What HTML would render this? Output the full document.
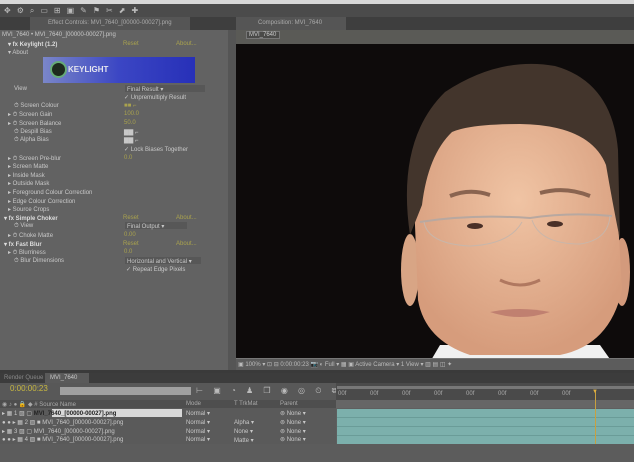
<!DOCTYPE html><html><head><style>
*{margin:0;padding:0;box-sizing:border-box}
body{width:634px;height:462px;overflow:hidden;background:#5f5f5f;font-family:"Liberation Sans",sans-serif;font-size:6px;color:#c8c8c8;position:relative}
.a{position:absolute;white-space:nowrap}
.y{color:#a9a24e}
.b{font-weight:bold;color:#ddd}
</style></head><body>
<div class="a" style="left:0;top:0;width:634px;height:4px;background:#d8d8d8"></div>
<div class="a" style="left:0;top:4px;width:634px;height:13px;background:#4b4b4b"></div>
<div class="a" style="left:4px;top:6px;color:#bbb;font-size:8px;letter-spacing:6px">✥⚙⌕▭⊞▣✎⚑✂⬈✚</div>
<div class="a" style="left:0;top:17px;width:634px;height:13px;background:#3e3e3e"></div>
<div class="a" style="left:30px;top:17px;width:160px;height:13px;background:#555"></div>
<div class="a" style="left:48px;top:20px;color:#aaa">Effect Controls: MVI_7640_[00000-00027].png</div>
<div class="a" style="left:236px;top:17px;width:110px;height:13px;background:#555"></div>
<div class="a" style="left:258px;top:20px;color:#aaa">Composition: MVI_7640</div>
<div class="a" style="left:0;top:30px;width:230px;height:398px;background:#626262"></div>
<div class="a" style="left:2px;top:32px">MVI_7640 • MVI_7640_[00000-00027].png</div>
<div class="a" style="left:236px;top:30px;width:398px;height:14px;background:#5a5a56"></div>
<div class="a" style="left:246px;top:31px;width:34px;height:8px;background:#4a4a48;border:1px solid #777"></div>
<div class="a" style="left:249px;top:32px">MVI_7640</div>
<div class="a" style="left:228px;top:30px;width:8px;height:342px;background:#555"></div>
<div class="a" style="left:43px;top:57px;width:152px;height:26px;background:linear-gradient(90deg,#7a86c8,#3b46c4 50%,#2730b8);"></div>
<div class="a" style="left:50px;top:61px;width:17px;height:17px;border-radius:50%;background:#1e2a1e;border:2px solid #6a7"></div>
<div class="a" style="left:68px;top:65px;color:#e6e6f0;font-weight:bold;font-size:8px">KEYLIGHT</div>
<div class="a b" style="left:8px;top:41px">▾ fx Keylight (1.2)</div><div class="a y" style="left:123px;top:41px">Reset</div><div class="a y" style="left:176px;top:41px">About...</div>
<div class="a" style="left:8px;top:49px">▾ About</div>
<div class="a" style="left:14px;top:86px">View</div>
<div class="a" style="left:125px;top:85px;width:80px;height:7px;background:#575757"></div><div class="a" style="left:127px;top:86px">Final Result ▾</div>
<div class="a" style="left:124px;top:94px">✓ Unpremultiply Result</div>
<div class="a" style="left:14px;top:103px">⏱ Screen Colour</div><div class="a y" style="left:124px;top:103px">■■ ⌐</div>
<div class="a" style="left:8px;top:111px">▸ ⏱ Screen Gain</div><div class="a y" style="left:124px;top:111px">100.0</div>
<div class="a" style="left:8px;top:120px">▸ ⏱ Screen Balance</div><div class="a y" style="left:124px;top:120px">50.0</div>
<div class="a" style="left:14px;top:129px">⏱ Despill Bias</div><div class="a" style="left:124px;top:129px">▇▇ ⌐</div>
<div class="a" style="left:14px;top:137px">⏱ Alpha Bias</div><div class="a" style="left:124px;top:137px">▇▇ ⌐</div>
<div class="a" style="left:124px;top:146px">✓ Lock Biases Together</div>
<div class="a" style="left:8px;top:155px">▸ ⏱ Screen Pre-blur</div><div class="a y" style="left:124px;top:155px">0.0</div>
<div class="a" style="left:8px;top:163px">▸ Screen Matte</div>
<div class="a" style="left:8px;top:172px">▸ Inside Mask</div>
<div class="a" style="left:8px;top:180px">▸ Outside Mask</div>
<div class="a" style="left:8px;top:189px">▸ Foreground Colour Correction</div>
<div class="a" style="left:8px;top:198px">▸ Edge Colour Correction</div>
<div class="a" style="left:8px;top:206px">▸ Source Crops</div>
<div class="a b" style="left:4px;top:215px">▾ fx Simple Choker</div><div class="a y" style="left:123px;top:215px">Reset</div><div class="a y" style="left:176px;top:215px">About...</div>
<div class="a" style="left:14px;top:223px">⏱ View</div><div class="a" style="left:125px;top:222px;width:62px;height:7px;background:#575757"></div><div class="a" style="left:127px;top:223px">Final Output ▾</div>
<div class="a" style="left:8px;top:232px">▸ ⏱ Choke Matte</div><div class="a y" style="left:124px;top:232px">0.00</div>
<div class="a b" style="left:4px;top:241px">▾ fx Fast Blur</div><div class="a y" style="left:123px;top:241px">Reset</div><div class="a y" style="left:176px;top:241px">About...</div>
<div class="a" style="left:8px;top:249px">▸ ⏱ Blurriness</div><div class="a y" style="left:124px;top:249px">0.0</div>
<div class="a" style="left:14px;top:258px">⏱ Blur Dimensions</div><div class="a" style="left:125px;top:257px;width:76px;height:7px;background:#575757"></div><div class="a" style="left:127px;top:258px">Horizontal and Vertical ▾</div>
<div class="a" style="left:126px;top:266px">✓ Repeat Edge Pixels</div>
<div class="a" style="left:236px;top:44px;width:398px;height:314px;background:#0e0b0b;overflow:hidden">
<svg width="398" height="314" viewBox="236 44 398 314" style="position:absolute;left:0;top:0">
<defs><radialGradient id="sk" cx="50%" cy="40%" r="60%"><stop offset="0" stop-color="#f0c4a4"/><stop offset="1" stop-color="#d69c7c"/></radialGradient></defs>
<path d="M430 362 L440 345 L600 345 L612 362 Z" fill="#f0f0f0"/>
<ellipse cx="410" cy="270" rx="9" ry="36" fill="#d8a585"/>
<ellipse cx="622" cy="272" rx="8" ry="34" fill="#d39a7c"/>
<path d="M414 200 Q412 120 470 100 Q520 90 580 110 Q620 140 618 220 L622 290 Q610 345 560 355 L470 355 Q425 340 418 300 Z" fill="url(#sk)"/>
<path d="M410 235 Q396 140 445 92 Q500 56 555 66 Q612 82 618 150 L620 240 Q612 200 606 165 Q590 125 520 124 Q470 124 452 132 Q428 155 422 205 Z" fill="#43352c"/>
<path d="M450 196 Q470 188 490 195 M540 193 Q565 186 590 196" stroke="#8a6450" stroke-width="4" fill="none"/>
<path d="M420 222 Q470 214 530 218 Q570 212 612 216" stroke="#b8a8a0" stroke-width="2" fill="none"/>
<path d="M424 222 Q428 244 470 246 Q510 244 522 222 M532 220 Q540 244 580 244 Q608 240 610 216" stroke="#c8b6aa" stroke-width="1" fill="none"/>
<ellipse cx="475" cy="226" rx="8" ry="3" fill="#4a3028"/><ellipse cx="555" cy="224" rx="8" ry="3" fill="#4a3028"/>
<path d="M500 280 Q520 290 540 280" stroke="#b07860" stroke-width="3" fill="none"/>
<path d="M490 312 Q520 306 550 312 Q520 322 490 312 Z" fill="#c08070"/>
</svg></div>
<div class="a" style="left:236px;top:358px;width:398px;height:12px;background:#5c5c5c;border-top:1px solid #777"></div>
<div class="a" style="left:238px;top:361px;color:#bbb">▣ 100% ▾ ⊡ ⊟ 0:00:00:23 📷 ◐ Full ▾ ▦ ▣ Active Camera ▾ 1 View ▾ ▥ ▤ ◫ ✦</div>
<div class="a" style="left:0;top:370px;width:634px;height:3px;background:#3a3a3a"></div>
<div class="a" style="left:0;top:373px;width:634px;height:10px;background:#3c3c3c"></div>
<div class="a" style="left:45px;top:373px;width:44px;height:10px;background:#5a5a5a"></div>
<div class="a" style="left:4px;top:375px;color:#888">Render Queue</div><div class="a" style="left:50px;top:375px">MVI_7640</div>
<div class="a" style="left:0;top:383px;width:634px;height:17px;background:#585858"></div>
<div class="a" style="left:10px;top:384px;color:#c8b840;font-size:8px">0:00:00:23</div>
<div class="a" style="left:60px;top:387px;width:131px;height:8px;background:#a0a0a0"></div>
<div class="a" style="left:196px;top:386px;color:#bbb;font-size:8px;letter-spacing:4px">⊢ ▣ ◔ ♟ ❒ ◉ ◎ ⏲ ⧉</div>
<div class="a" style="left:0;top:400px;width:336px;height:8px;background:#4e4e4e"></div>
<div class="a" style="left:2px;top:401px;color:#aaa">◉ ♪ ● 🔒  ◆ #  Source Name</div><div class="a" style="left:186px;top:401px;color:#aaa">Mode</div><div class="a" style="left:234px;top:401px;color:#aaa">T  TrkMat</div><div class="a" style="left:280px;top:401px;color:#aaa">Parent</div>
<div class="a" style="left:0;top:408px;width:336px;height:36px;background:#5a5a5a"></div>
<div class="a" style="left:52px;top:409px;width:130px;height:8px;background:#d8d8d8"></div>
<div class="a" style="left:2px;top:410px;line-height:8.8px">
<div>      ▸ ▦ 1  ▨ ▢ <b style="color:#222">MVI_7640_[00000-00027].png</b></div>
<div>●  ●  ▸ ▦ 2  ▨ ■ MVI_7640_[00000-00027].png</div>
<div>      ▸ ▦ 3  ▨ ▢ MVI_7640_[00000-00027].png</div>
<div>●  ●  ▸ ▦ 4  ▨ ■ MVI_7640_[00000-00027].png</div></div>
<div class="a" style="left:186px;top:410px;line-height:8.8px"><div>Normal ▾</div><div>Normal ▾</div><div>Normal ▾</div><div>Normal ▾</div></div>
<div class="a" style="left:234px;top:419px;line-height:8.8px"><div>Alpha ▾</div><div>None ▾</div><div>Matte ▾</div></div>
<div class="a" style="left:280px;top:410px;line-height:8.8px"><div>⊚ None ▾</div><div>⊚ None ▾</div><div>⊚ None ▾</div><div>⊚ None ▾</div></div>
<div class="a" style="left:336px;top:383px;width:298px;height:25px;background:#4a4a4a"></div>
<div class="a" style="left:337px;top:386px;width:297px;height:3px;background:#777"></div>
<div class="a" style="left:338px;top:391px;color:#aaa;word-spacing:22px">00f 00f 00f 00f 00f 00f 00f 00f</div>
<div class="a" style="left:336px;top:400px;width:298px;height:8px;background:#666"></div>
<div class="a" style="left:337px;top:409px;width:297px;height:35px;background:#7cb0ac"></div>
<div class="a" style="left:337px;top:417px;width:297px;height:1px;background:#6a9c98"></div>
<div class="a" style="left:337px;top:426px;width:297px;height:1px;background:#6a9c98"></div>
<div class="a" style="left:337px;top:435px;width:297px;height:1px;background:#6a9c98"></div>
<div class="a" style="left:595px;top:390px;width:1px;height:72px;background:#c8a040"></div>
<div class="a" style="left:592px;top:389px;color:#e0b040">▼</div>
<div class="a" style="left:0;top:444px;width:634px;height:18px;background:#5c5c5c"></div>
</body></html>
